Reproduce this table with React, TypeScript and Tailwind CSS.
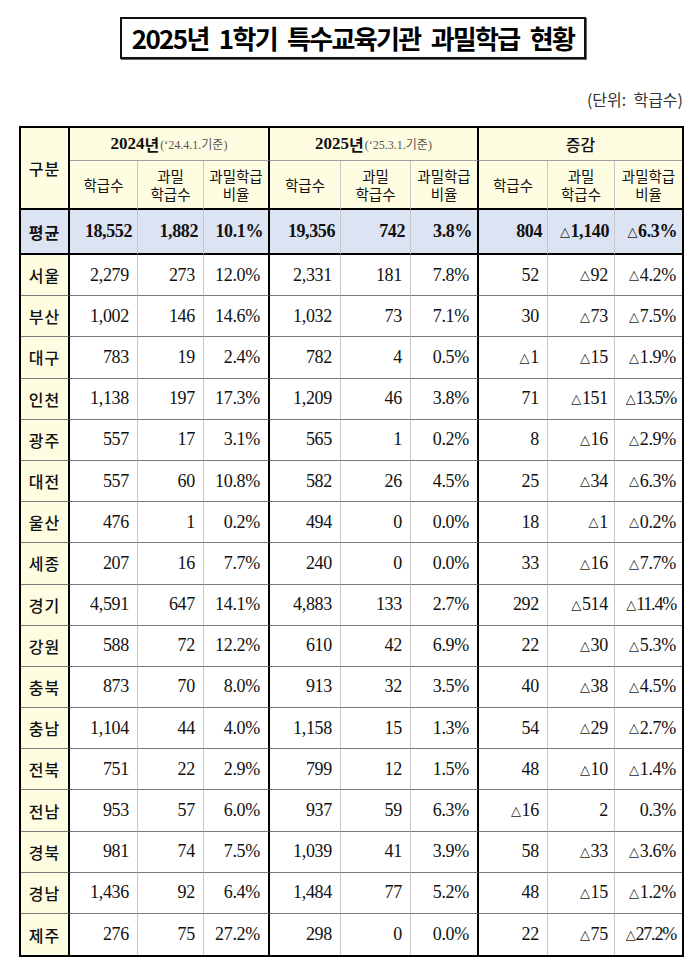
import React from "react";

const rows: string[][] = [
  ["서울", "2,279", "273", "12.0%", "2,331", "181", "7.8%", "52", "△92", "△4.2%"],
  ["부산", "1,002", "146", "14.6%", "1,032", "73", "7.1%", "30", "△73", "△7.5%"],
  ["대구", "783", "19", "2.4%", "782", "4", "0.5%", "△1", "△15", "△1.9%"],
  ["인천", "1,138", "197", "17.3%", "1,209", "46", "3.8%", "71", "△151", "△13.5%"],
  ["광주", "557", "17", "3.1%", "565", "1", "0.2%", "8", "△16", "△2.9%"],
  ["대전", "557", "60", "10.8%", "582", "26", "4.5%", "25", "△34", "△6.3%"],
  ["울산", "476", "1", "0.2%", "494", "0", "0.0%", "18", "△1", "△0.2%"],
  ["세종", "207", "16", "7.7%", "240", "0", "0.0%", "33", "△16", "△7.7%"],
  ["경기", "4,591", "647", "14.1%", "4,883", "133", "2.7%", "292", "△514", "△11.4%"],
  ["강원", "588", "72", "12.2%", "610", "42", "6.9%", "22", "△30", "△5.3%"],
  ["충북", "873", "70", "8.0%", "913", "32", "3.5%", "40", "△38", "△4.5%"],
  ["충남", "1,104", "44", "4.0%", "1,158", "15", "1.3%", "54", "△29", "△2.7%"],
  ["전북", "751", "22", "2.9%", "799", "12", "1.5%", "48", "△10", "△1.4%"],
  ["전남", "953", "57", "6.0%", "937", "59", "6.3%", "△16", "2", "0.3%"],
  ["경북", "981", "74", "7.5%", "1,039", "41", "3.9%", "58", "△33", "△3.6%"],
  ["경남", "1,436", "92", "6.4%", "1,484", "77", "5.2%", "48", "△15", "△1.2%"],
  ["제주", "276", "75", "27.2%", "298", "0", "0.0%", "22", "△75", "△27.2%"],
];

const avg = ["평균", "18,552", "1,882", "10.1%", "19,356", "742", "3.8%", "804", "△1,140", "△6.3%"];

const sans = "font-['Noto_Sans_CJK_KR','Noto_Sans',sans-serif]";
const serif = "font-['Liberation_Serif','Noto_Sans_CJK_KR',serif]";

function rightBorder(ci: number): string {
  if (ci === 9) return "";
  if (ci === 0 || ci === 3 || ci === 6) return "border-r-2 border-r-black";
  return "border-r border-r-[#c8c8c8]";
}

function SubHead({ ci, a, b }: { ci: number; a: string; b?: string }) {
  return (
    <div
      className={`flex items-center justify-center text-center bg-[#fffde1] border-b-2 border-b-black ${rightBorder(ci)} ${sans} text-[14.5px] leading-[18px] text-[#111]`}
    >
      <span>
        {a}
        {b ? (
          <>
            <br />
            {b}
          </>
        ) : null}
      </span>
    </div>
  );
}

function Tri({ v }: { v: string }) {
  if (v.startsWith("△")) {
    return (
      <>
        <span className="font-['DejaVu_Sans',sans-serif] text-[13px] text-[#222] mr-[1px]">△</span>
        {v.slice(1)}
      </>
    );
  }
  return <>{v}</>;
}

export default function App() {
  return (
    <div className="w-[700px] h-[962px] bg-white text-[#111]">
      <div className="pt-[17px] flex">
        <div className="ml-[120px] w-[466px] h-[42px] border-2 border-[#111] flex items-center justify-center shadow-[1px_1px_0_#666]">
          <span
            className={`${sans} font-bold text-[26px] tracking-[-1.7px] [word-spacing:6px] text-black leading-none`}
          >
            2025년 1학기 특수교육기관 과밀학급 현황
          </span>
        </div>
      </div>

      <div className={`mt-[28px] pr-[17px] text-right ${sans} text-[16px] leading-[24px] text-[#333]`}>
        (단위:&nbsp; 학급수)
      </div>

      <div className="mt-[15px] ml-[19px] w-[665px] border-2 border-black">
        <div className="grid grid-cols-[49px_68px_66px_66px_71px_70px_68px_69px_67px_67px] grid-rows-[33px_49px_45px_repeat(17,41.2px)]">
          {/* header row 1 */}
          <div
            className={`row-span-2 flex items-center justify-center bg-[#fffde1] border-b-2 border-b-black border-r-2 border-r-black ${sans} text-[16px] font-medium tracking-[1px]`}
          >
            구분
          </div>
          <div className="col-span-3 flex items-center justify-center bg-[#fffde1] border-b border-b-[#a0a0a0] border-r-2 border-r-black">
            <span className={`${serif} font-bold text-[17px]`}>2024</span>
            <span className={`${sans} font-bold text-[16px]`}>년</span>
            <span className={`${serif} text-[12px] text-[#555] ml-[1px]`}>
              (‘24.4.1.<span className={sans}>기준</span>)
            </span>
          </div>
          <div className="col-span-3 flex items-center justify-center bg-[#fffde1] border-b border-b-[#a0a0a0] border-r-2 border-r-black">
            <span className={`${serif} font-bold text-[17px]`}>2025</span>
            <span className={`${sans} font-bold text-[16px]`}>년</span>
            <span className={`${serif} text-[12px] text-[#555] ml-[1px]`}>
              (‘25.3.1.<span className={sans}>기준</span>)
            </span>
          </div>
          <div
            className={`col-span-3 flex items-center justify-center bg-[#fffde1] border-b border-b-[#a0a0a0] ${sans} text-[16px] font-medium`}
          >
            증감
          </div>

          {/* header row 2 */}
          <SubHead ci={1} a="학급수" />
          <SubHead ci={2} a="과밀" b="학급수" />
          <SubHead ci={3} a="과밀학급" b="비율" />
          <SubHead ci={4} a="학급수" />
          <SubHead ci={5} a="과밀" b="학급수" />
          <SubHead ci={6} a="과밀학급" b="비율" />
          <SubHead ci={7} a="학급수" />
          <SubHead ci={8} a="과밀" b="학급수" />
          <SubHead ci={9} a="과밀학급" b="비율" />

          {/* average row */}
          {avg.map((v, ci) => (
            <div
              key={`a${ci}`}
              className={`flex items-center bg-[#dce3f3] border-b-2 border-b-black ${rightBorder(ci)} ${
                ci === 0
                  ? `justify-center ${sans} text-[16px] font-bold tracking-[1px]`
                  : `justify-end pr-[5px] ${serif} text-[18px] font-bold tracking-[-0.4px]`
              }`}
            >
              <Tri v={v} />
            </div>
          ))}

          {/* body rows */}
          {rows.map((r, ri) =>
            r.map((v, ci) => {
              const last = ri === rows.length - 1;
              const tight = v.length >= 6 && v.startsWith("△") && v.includes("%");
              return (
                <div
                  key={`${ri}-${ci}`}
                  className={`flex items-center ${last ? "" : "border-b border-b-[#7a7a7a]"} ${rightBorder(ci)} ${
                    ci === 0
                      ? `justify-center bg-[#fffde1] ${sans} text-[16px] font-medium tracking-[1px]`
                      : `justify-end ${ci >= 8 ? "pr-[6px]" : "pr-[8px]"} ${serif} text-[18px] ${
                          tight ? "tracking-[-1.2px]" : "tracking-[-0.3px]"
                        }`
                  }`}
                >
                  <Tri v={v} />
                </div>
              );
            })
          )}
        </div>
      </div>
    </div>
  );
}
